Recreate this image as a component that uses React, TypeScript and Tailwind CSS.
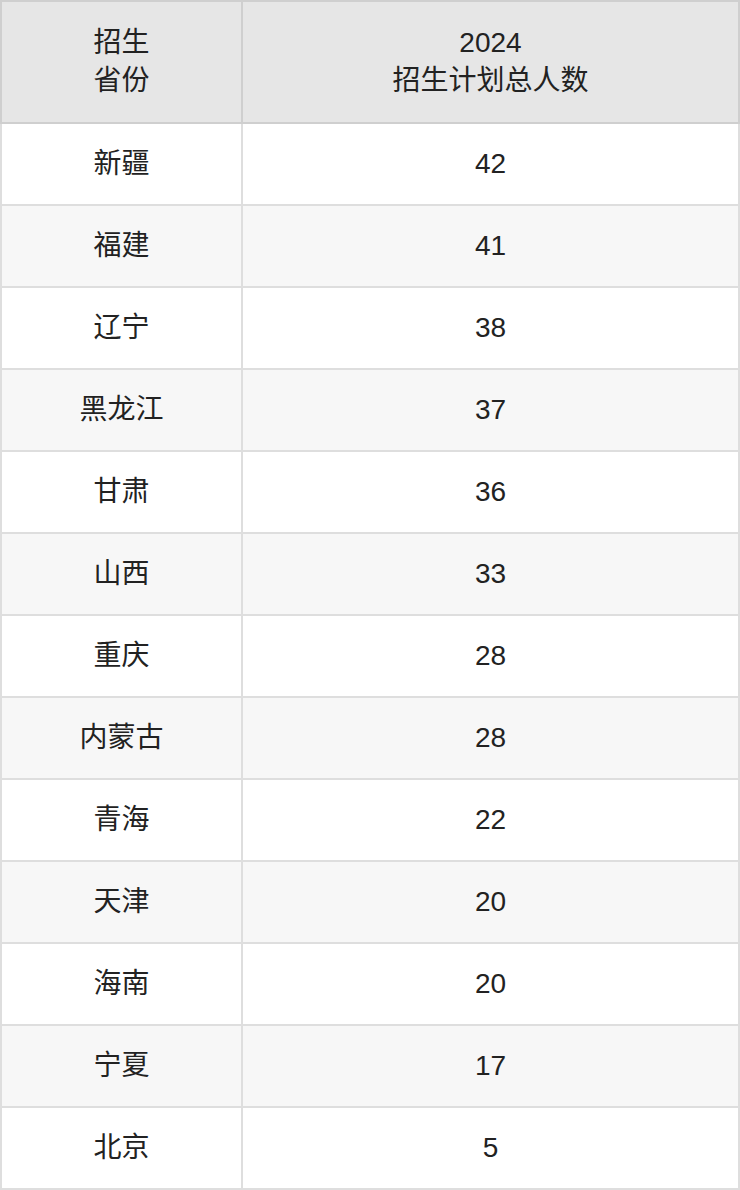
import React from "react";

const rows: [string, string][] = [
  ["新疆", "42"],
  ["福建", "41"],
  ["辽宁", "38"],
  ["黑龙江", "37"],
  ["甘肃", "36"],
  ["山西", "33"],
  ["重庆", "28"],
  ["内蒙古", "28"],
  ["青海", "22"],
  ["天津", "20"],
  ["海南", "20"],
  ["宁夏", "17"],
  ["北京", "5"],
];

export default function App() {
  return (
    <div
      className="w-[740px] text-[28px] text-[#222222] bg-white"
      style={{ fontFamily: '"Liberation Sans", "Noto Sans CJK SC", sans-serif' }}
    >
      <div className="flex h-[124px] border-2 border-[#cfcfcf] bg-[#e6e6e6]">
        <div className="w-[239px] flex flex-col items-center justify-center leading-[38px]">
          <span>招生</span>
          <span>省份</span>
        </div>
        <div className="flex-1 border-l-2 border-[#cfcfcf] flex flex-col items-center justify-center leading-[38px]">
          <span>2024</span>
          <span>招生计划总人数</span>
        </div>
      </div>
      {rows.map(([p, n], i) => (
        <div
          key={p + i}
          className={
            "flex h-[82px] border-x-2 border-b-2 border-[#dedede] " +
            (i % 2 === 1 ? "bg-[#f7f7f7]" : "bg-white")
          }
        >
          <div className="w-[239px] flex items-center justify-center">{p}</div>
          <div className="flex-1 border-l-2 border-[#dedede] flex items-center justify-center">{n}</div>
        </div>
      ))}
    </div>
  );
}
